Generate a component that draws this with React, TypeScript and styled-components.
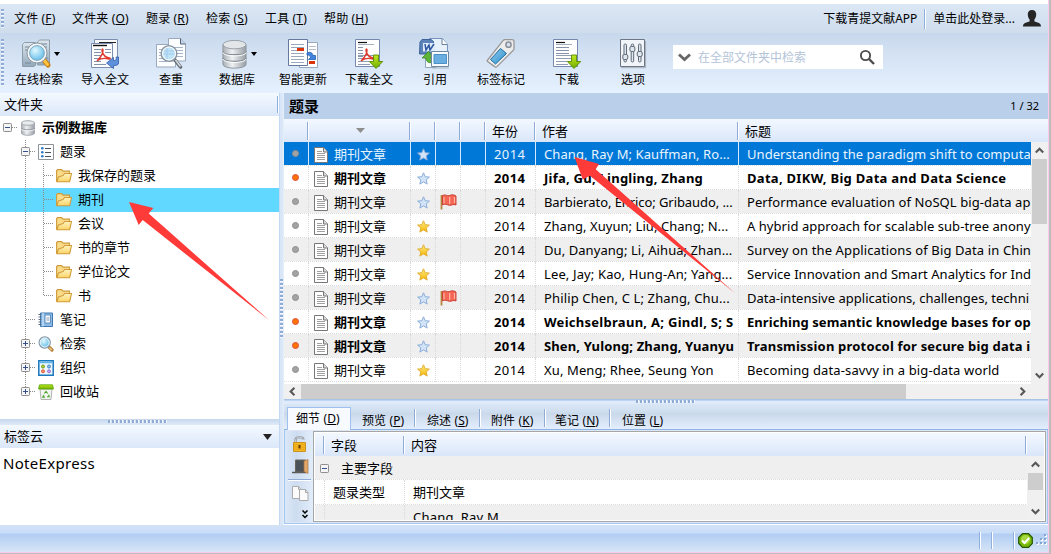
import React from 'react';
import styled, { createGlobalStyle, css } from 'styled-components';

const Global = createGlobalStyle`
  * { box-sizing: border-box; }
  body { margin: 0; background: #fff; overflow: hidden; }
`;

const Screen = styled.div`
  width: 1051px;
  height: 554px;
  display: flex;
  background: #bdbdbd;
  font-family: "Noto Sans", "Noto Sans CJK SC", sans-serif;
  font-size: 13px;
  color: #000;
  white-space: pre;
  position: relative;
  overflow: hidden;
`;

const Win = styled.div`
  width: 1049px;
  height: 553px;
  padding-top: 4px;
  background: #fff;
  border-right: 1px solid #f9c9ee;
  border-bottom: 1px solid #f9c9ee;
  display: flex;
  flex-direction: column;
`;

const MenuBar = styled.div`
  height: 29px;
  flex: none;
  display: flex;
  align-items: center;
  font-size: 12px;
  line-height: 28px;
  background: linear-gradient(#dbe7f5, #cedcec);
`;

const Grip = styled.div<{ $h: number }>`
  width: 3px;
  height: ${p => p.$h}px;
  margin: 0 10px 0 1px;
  background: repeating-linear-gradient(#8fabd6 0 2px, #f4f8fd 2px 3px, transparent 3px 4px);
`;

const MenuItem = styled.div<{ $w: number }>`
  width: ${p => p.$w}px;
  letter-spacing: 0.15px;
`;

const Push = styled.div`
  flex: 1;
`;

const Rule = styled.div<{ $h: number }>`
  width: 2px;
  height: ${p => p.$h}px;
  background: linear-gradient(90deg, #8fb0dc 50%, #fff 50%);
`;

const Account = styled.div<{ $pad: string }>`
  padding: ${p => p.$pad};
`;

const ToolBar = styled.div`
  height: 60px;
  flex: none;
  display: flex;
  align-items: flex-start;
  background: linear-gradient(#c8d8ec, #d6e4f5 45%, #e6f1ff);
`;

const ToolGrip = styled(Grip)`
  margin: 6px 2px 0 1px;
`;

const Tool = styled.div`
  width: 66px;
  padding-top: 5px;
  display: flex;
  flex-direction: column;
  align-items: center;
  font-size: 12px;
  line-height: 18px;
`;

const ToolPic = styled.div`
  height: 32px;
  margin-bottom: 1px;
  display: flex;
  align-items: center;
`;

const DropMark = styled.div<{ $gap: number }>`
  display: flex;
  margin: 0 ${p => -p.$gap}px 0 ${p => p.$gap}px;
`;

const SearchBox = styled.div`
  width: 210px;
  height: 24px;
  margin: 12px 0 0 7px;
  padding: 0 8px 0 5px;
  background: #fff;
  display: flex;
  align-items: center;
  font-size: 12px;
  line-height: 24px;
  color: #b4c4d8;
`;

const SearchHint = styled.div`
  flex: 1;
  padding: 1px 0 0 7px;
`;

const Body = styled.div`
  height: 432px;
  flex: none;
  display: flex;
`;

const Side = styled.div`
  width: 279px;
  display: flex;
  flex-direction: column;
`;

const SideHead = styled.div`
  height: 23px;
  flex: none;
  padding: 0 0 0 4px;
  display: flex;
  align-items: center;
  line-height: 23px;
  background: linear-gradient(#f4f9ff, #dbe7f9);
`;

const HeadArrow = styled.div`
  margin-right: 7px;
  height: 23px;
  display: flex;
  align-items: center;
`;

const Tree = styled.div`
  height: 303px;
  flex: none;
  background: #fff;
`;

const TreeRow = styled.div<{ $sel?: boolean; $bold?: boolean }>`
  height: 24px;
  display: flex;
  align-items: center;
  line-height: 23px;
  background: ${p => (p.$sel ? '#61d8ff' : 'transparent')};
  font-weight: ${p => (p.$bold ? 700 : 400)};
`;

const TreeLabel = styled.div`
  margin: -1px 0 0 6px;
`;

const SplitH = styled.div`
  height: 6px;
  flex: none;
  display: flex;
  justify-content: center;
  padding: 1px 4px 0 0;
  background: linear-gradient(#c5d7ec, #dfeafa);
`;

const DotsH = styled.div`
  width: 59px;
  height: 3px;
  background: repeating-linear-gradient(90deg, #8fabd6 0 2px, #f7faff 2px 3px, transparent 3px 4px);
`;

const Tags = styled.div`
  flex: 1;
  padding: 3px 3px;
  font-size: 15px;
  line-height: 25px;
  letter-spacing: 0.3px;
`;

const SplitV = styled.div`
  width: 5px;
  background: linear-gradient(90deg, #c3d8f2 1px, #d9e6f7 1px 3px, #e8f1fd);
  padding: 186px 0 0 1px;
`;

const DotsV = styled.div`
  width: 3px;
  height: 59px;
  background: repeating-linear-gradient(#8fabd6 0 2px, #f7faff 2px 3px, transparent 3px 4px);
`;

const Main = styled.div`
  width: 764px;
  display: flex;
  flex-direction: column;
`;

const MainTitle = styled.div`
  height: 26px;
  flex: none;
  padding: 0 9px 0 5px;
  display: flex;
  align-items: center;
  justify-content: space-between;
  background: #b9cfea;
  line-height: 24px;
  font-size: 15px;
  font-weight: 700;
`;

const Counter = styled.span`
  font-size: 11px;
  font-weight: 400;
`;

const COLS = '25px 102px 25px 25px 25px 50px 203px 292px';

const Grid = styled.div<{ $cols: string }>`
  display: grid;
  grid-template-columns: ${p => p.$cols};
`;

const ListHead = styled(Grid)`
  height: 23px;
  flex: none;
  line-height: 23px;
  align-items: center;
  background: linear-gradient(#f3f8ff, #d9e6f9);
`;

const HeadCell = styled.div<{ $last?: boolean }>`
  height: 18px;
  padding-left: 6px;
  line-height: 18px;
  display: flex;
  align-items: center;
  ${p => !p.$last && css`
    background: linear-gradient(90deg, #8fabd6 50%, #fff 50%) right / 2px 100% no-repeat;
  `}
`;

const SortCell = styled(HeadCell)`
  justify-content: center;
  padding: 0;
`;

const ListArea = styled.div`
  height: 242px;
  flex: none;
  display: flex;
`;

const Rows = styled.div`
  width: 747px;
  overflow: hidden;
`;

const ROW_DOTS = 'repeating-linear-gradient(90deg, #dcdcdc 0 1px, #fff 1px 2px)';

const Row = styled(Grid)<{ $sel?: boolean; $alt?: boolean; $bold?: boolean; $h?: number }>`
  height: ${p => p.$h ?? 24}px;
  line-height: 23px;
  font-weight: ${p => (p.$bold ? 700 : 400)};
  color: ${p => (p.$sel ? '#e9f4ff' : '#000')};
  background: ${ROW_DOTS} bottom / 100% 1px no-repeat, ${p => (p.$sel ? '#0078d7' : p.$alt ? '#efefef' : '#fff')};
`;

const Cell = styled.div<{ $sel?: boolean; $pad?: number; $last?: boolean; $track?: number }>`
  height: 24px;
  padding: 1px 0 0 ${p => p.$pad ?? 0}px;
  display: flex;
  align-items: center;
  overflow: hidden;
  letter-spacing: ${p => p.$track ?? 0}px;
  border-right: ${p => (p.$last ? 'none' : p.$sel ? '1px solid #d5e9fb' : '1px dotted #d9d9d9')};
`;

const PicCell = styled(Cell)`
  padding-top: 0;
`;

const Dot = styled.div<{ $hot?: boolean }>`
  width: 7px;
  height: 7px;
  margin-top: -1px;
  border-radius: 50%;
  background: ${p => (p.$hot ? '#ff7200' : '#a3a3a3')};
  border: 1px solid ${p => (p.$hot ? '#dc5145' : '#8e8e8e')};
`;

const Kind = styled.div<{ $gap?: number }>`
  margin-left: ${p => p.$gap ?? 6}px;
`;

const VBar = styled.div`
  width: 17px;
  padding: 0 1px 0 0;
  background: #f0f0f0;
  display: flex;
  flex-direction: column;
`;

const VThumb = styled.div<{ $h: number }>`
  height: ${p => p.$h}px;
  width: 15px;
  margin-left: 1px;
  background: #cdcdcd;
`;

const BarBtn = styled.div`
  width: 17px;
  height: 17px;
  flex: none;
  display: flex;
  align-items: center;
  justify-content: center;
`;

const HBar = styled.div`
  height: 15px;
  flex: none;
  padding-right: 17px;
  display: flex;
  align-items: center;
  background: #f0f0f0;
`;

const HThumb = styled.div`
  width: 605px;
  height: 15px;
  background: #cdcdcd;
`;

const SplitMain = styled(SplitH)`
  height: 5px;
  padding-right: 2px;
  background: linear-gradient(#a9c3e4 0 1px, #bdd5f2 1px 2px, #dfeafa 2px);
`;

const Tabs = styled.div`
  height: 26px;
  flex: none;
  padding: 3px 0 0 3px;
  display: flex;
  font-size: 12px;
  background: linear-gradient(#d9e6f6 0, #cfdeef 8px, #c9d8ea 9px, #e3eefd);
  border-bottom: 1px solid #8fb4e3;
`;

const Tab = styled.div<{ $w: number; $on?: boolean; $sep?: boolean; $pad: number }>`
  width: ${p => p.$w}px;
  height: 22px;
  padding-left: ${p => p.$pad}px;
  line-height: 27px;
  letter-spacing: 0.1px;
  ${p => p.$sep && css`
    background: linear-gradient(90deg, #8fabd6 50%, #fff 50%) right 2px / 2px 18px no-repeat;
  `}
  ${p => p.$on && css`
    height: 23px;
    line-height: 21px;
    border: 1px solid #9dc0ee;
    border-bottom: none;
    background: #f7fbff;
  `}
`;

const Detail = styled.div`
  height: 94px;
  flex: none;
  padding: 1px 1px 1px 0;
  display: flex;
  border: 1px solid #a4c6f0;
  border-top: none;
  background: #dce8f7;
`;

const Tray = styled.div`
  width: 28px;
  padding: 5px 0 0 3px;
  display: flex;
  flex-direction: column;
  align-items: flex-start;
  background: linear-gradient(90deg, #dbe8f8, #cddcef 40%, #e2edfb);
`;

const TrayPic = styled.div<{ $h: number; $left?: number }>`
  height: ${p => p.$h}px;
  margin-left: ${p => p.$left ?? 4}px;
  display: flex;
  align-items: flex-start;
`;

const TrayRule = styled.div`
  width: 23px;
  height: 2px;
  margin-bottom: 5px;
  background: linear-gradient(#8fabd6 50%, #fff 50%);
`;

const Sheet = styled.div`
  flex: 1;
  height: 91px;
  border: 1px solid #a6a6a6;
  padding: 1px;
  background: #fff;
  overflow: hidden;
`;

const SheetBody = styled.div`
  height: 64px;
  display: flex;
`;

const Fields = styled.div`
  width: 713px;
  flex: 1;
  overflow: hidden;
`;

const Status = styled.div`
  height: 27px;
  flex: none;
  padding: 3px 0 0 0;
  display: flex;
  align-items: center;
  background: linear-gradient(#d3e2f6 0, #c9ddf9 8px, #b1cdf3 9px, #d7e5f6 27px);
`;

const Gap = styled.div<{ $w: number }>`
  width: ${p => p.$w}px;
`;

const Overlay = styled.svg`
  position: absolute;
  left: 0;
  top: 0;
  pointer-events: none;
`;

const Sprite = styled.svg`
  position: absolute;
`;

const Key = ({ k }: { k: string }) => <> (<u>{k}</u>)</>;

const Caret = ({ w = 6, fill = '#000', h = 4 }: { w?: number; h?: number; fill?: string }) => (
  <svg width={w} height={h} viewBox="0 0 10 6" preserveAspectRatio="none"><path d="M0 0H10L5 6Z" fill={fill} /></svg>
);

const Chevron = ({ dir, size = 9 }: { dir: 'up' | 'down' | 'left' | 'right'; size?: number }) => {
  const turn = { up: 0, right: 90, down: 180, left: 270 }[dir];
  return (
    <svg width={size} height={size} viewBox="0 0 8 8">
      <path transform={`rotate(${turn} 4 4)`} d="M.7 5.7L4 2.4L7.3 5.7" fill="none" stroke="#585858" strokeWidth="1.9" />
    </svg>
  );
};

const Lines = ({ x, y, w, n, step = 3, c = '#8592ab' }: { x: number; y: number; w: number; n: number; step?: number; c?: string }) => (
  <path d={Array.from({ length: n }, (_, i) => `M${x} ${y + i * step}h${w}`).join('')} stroke={c} strokeWidth="1" />
);

const Defs = () => (
  <Sprite width="0" height="0">
    <defs>
      <linearGradient id="metal"><stop offset="0" stopColor="#a9afb5" /><stop offset=".4" stopColor="#eef0f2" /><stop offset="1" stopColor="#979ea5" /></linearGradient>
      <linearGradient id="steel" x2="0" y2="1"><stop offset="0" stopColor="#dfe7ee" /><stop offset="1" stopColor="#93a8ba" /></linearGradient>
      <linearGradient id="green" x2="0" y2="1"><stop offset="0" stopColor="#c3e820" /><stop offset="1" stopColor="#6fae00" /></linearGradient>
      <linearGradient id="blue" x2="1" y2="1"><stop offset="0" stopColor="#8fcdf0" /><stop offset="1" stopColor="#2e8fcb" /></linearGradient>
      <linearGradient id="folder" x2="0" y2="1"><stop offset="0" stopColor="#fff3c2" /><stop offset="1" stopColor="#fbd465" /></linearGradient>
      <linearGradient id="gold" x2="0" y2="1"><stop offset="0" stopColor="#fff08a" /><stop offset="1" stopColor="#f5b400" /></linearGradient>
      <radialGradient id="lens" cx=".4" cy=".35"><stop offset="0" stopColor="#e2f8ff" /><stop offset="1" stopColor="#79c8ec" /></radialGradient>
    </defs>
  </Sprite>
);

const OnlineIcon = () => (
  <svg width="32" height="32" viewBox="0 0 32 32">
    <path d="M2.500 6.500l2-2h11v23l-2 1h-11z" fill="url(#steel)" stroke="#8b9dab" />
    <path d="M17.500 4l2-2h10v24l-2 1h-10z" fill="url(#steel)" stroke="#8b9dab" />
    <path d="M5 9h7M5 12h4M21 6h6M22 9h5M24 20h4M5 25h6" stroke="#75899b" />
    <path d="M23 21l5 6" stroke="#c8770c" strokeWidth="5" strokeLinecap="round" />
    <path d="M23.500 21.500l4 5" stroke="#ffc545" strokeWidth="3" strokeLinecap="round" />
    <circle cx="17" cy="15" r="8.600" fill="url(#lens)" stroke="#f5f9fb" strokeWidth="2.600" />
    <circle cx="17" cy="15" r="10" fill="none" stroke="#8a97a2" />
    <circle cx="17" cy="15" r="7.400" fill="none" stroke="#6293b1" strokeWidth=".8" />
  </svg>
);

const PdfMark = () => (
  <path d="M8 23C12 19 14.500 15 14 11.500C13.500 10.500 12.700 11 13 13C14 17 16 19.500 20.500 20C22 20.500 21 21.500 19 20.800C15 19.800 11.500 20.500 8.600 22.500" fill="none" stroke="#df3b2f" strokeWidth="1.400" />
);

const DownArrow = () => (
  <path d="M20.500 17h5v6.500h4.200l-6.700 7l-6.700-7h4.200z" fill="url(#green)" stroke="#578b00" strokeWidth=".9" />
);

const ImportIcon = () => (
  <svg width="32" height="32" viewBox="0 0 32 32">
    <path d="M5.500 1.500h23v24h-23z" fill="#f7f9fc" stroke="#7d8fae" />
    <path d="M10 4.500h17" stroke="#222" />
    <path d="M2.500 5.500h21v24h-21z" fill="#fff" stroke="#7d8fae" />
    <path d="M4 7.500h14" stroke="#111" strokeWidth="1.400" />
    <Lines x={5} y={11.500} w={7} n={5} />
    <Lines x={16} y={11.500} w={6} n={2} />
    <Lines x={5} y={26.500} w={12} n={1} />
    <PdfMark />
    <path d="M29.500 19v6c0 2-2 2.500-5 2.500v3l-7-5.500l7-5.500v3h1.500c1 0 1.200-.5 1.200-3.500z" fill="#5f90dc" stroke="#2e5ca8" strokeWidth=".8" />
  </svg>
);

const CompareIcon = () => (
  <svg width="32" height="32" viewBox="0 0 32 32">
    <path d="M1.500 6.500h19v22.500h-19z" fill="#fdfeff" stroke="#9aa8be" />
    <path d="M13.500.5h12l5 5.500v17h-17z" fill="#fdfeff" stroke="#9aa8be" />
    <path d="M25.500.5v5.500h5" fill="#c5d3e6" stroke="#50617c" />
    <Lines x={4} y={11.500} w={8} n={5} c="#a8b4c8" />
    <Lines x={19} y={9.500} w={9} n={4} c="#a8b4c8" />
    <path d="M20 22l5.500 7" stroke="#667079" strokeWidth="3.600" strokeLinecap="round" />
    <path d="M20.500 22l5 6.500" stroke="#d8dde1" strokeWidth="1.400" />
    <circle cx="14" cy="15.500" r="7.800" fill="#bfe3f7" stroke="#8b959f" strokeWidth="1.500" />
    <path d="M9 13h10M9 16h10M12 9.500v12" stroke="#a3cbee" />
    <circle cx="14" cy="15.500" r="6.500" fill="none" stroke="#fff" strokeWidth="1" />
  </svg>
);

const DbIcon = () => (
  <svg width="25" height="30" viewBox="0 0 26 32" preserveAspectRatio="none">
    <path d="M1 6v21c0 5.500 24 5.500 24 0V6z" fill="url(#metal)" stroke="#8d959c" />
    <ellipse cx="13" cy="6" rx="12" ry="4.500" fill="#e3e6e9" stroke="#959da4" />
    <path d="M1 13c0 5 24 5 24 0M1 20c0 5 24 5 24 0" fill="none" stroke="#868e96" strokeWidth="1.300" />
    <path d="M1 14.300c0 5 24 5 24 0M1 21.300c0 5 24 5 24 0" fill="none" stroke="#fff" />
  </svg>
);

const SmallDbIcon = () => (
  <svg width="16" height="16" viewBox="0 0 16 16">
    <path d="M1.500 3v10c0 3 13 3 13 0V3z" fill="url(#metal)" stroke="#a3a9ae" />
    <ellipse cx="8" cy="3" rx="6.500" ry="2.300" fill="#e9ebed" stroke="#a3a9ae" />
    <path d="M1.500 8c0 2.500 13 2.500 13 0" fill="none" stroke="#8f979e" />
    <path d="M1.500 9c0 2.500 13 2.500 13 0" fill="none" stroke="#fff" strokeWidth=".8" />
  </svg>
);

const UpdateIcon = () => (
  <svg width="32" height="32" viewBox="0 0 32 32">
    <path d="M12.500 4.500h18v25h-18z" fill="#fff" stroke="#9ba9bf" />
    <path d="M1.500 1.500h19v26h-19z" fill="#fff" stroke="#65799c" />
    <Lines x={4} y={6.500} w={13} n={7} c="#9aa8bd" />
    <path d="M10 10h7v3h-7zM22 23h6v3h-6z" fill="#dc3208" />
    <Lines x={22} y={8.500} w={7} n={2} c="#b3bdca" />
    <path d="M20 15c3-1.500 5.500-.5 6 2.500h2.500v4h-7l2-2c-.5-2-1.500-2.500-3.500-2.500z" fill="#4385dd" stroke="#2160b3" strokeWidth=".8" />
  </svg>
);

const DownloadIcon = ({ pdf }: { pdf?: boolean }) => (
  <svg width="32" height="32" viewBox="0 0 32 32">
    <path d="M2.500 1.500h24v27h-24z" fill="#fff" stroke="#7489ab" />
    <path d="M5 4.500h9" stroke="#111" strokeWidth="1.200" />
    <path d="M5 6.500h16" stroke="#a5b0c0" />
    <Lines x={5} y={9.500} w={pdf ? 5 : 13} n={pdf ? 4 : 3} />
    <path d="M5 17.500h18M5 20.500h16M5 23.500h11M5 26.500h12" stroke="#8592ab" strokeWidth=".9" />
    {pdf && <PdfMark />}
    <DownArrow />
  </svg>
);

const CiteIcon = () => (
  <svg width="32" height="32" viewBox="0 0 32 32">
    <path d="M10.500.5h13l5 6v8h-18z" fill="#e7f1fb" stroke="#7694bb" />
    <path d="M23 .5v6h5.500" fill="#fff" stroke="#6d8099" />
    <path d="M6.500 15v14.500h11" fill="#f5f9fc" stroke="#8da5bd" />
    <path d="M1 4l2-2.500h9l2.500 2v11l-2 1.500H.500z" fill="#5b83ba" stroke="#3e649b" />
    <path d="M4 5h12v8.500H4z" fill="#dfebfa" />
    <path d="M6 6l1 6l3-5l1 5l4-6" fill="none" stroke="#2d58a0" strokeWidth="1.500" />
    <path d="M3 20l6.500-6.500L15 20h-4c0 3 2 4 4 4.500c-6 1-8-1-8-4.500z" fill="#5fb537" stroke="#3a8b24" strokeWidth=".8" />
    <path d="M12.500 13.500h17v15h-17z" fill="#f7fafc" stroke="#6f88a2" />
    <path d="M15 16.500h12.500v9h-12.500z" fill="#69aee1" stroke="#4d90c5" />
    <path d="M13 30h17" stroke="#a7b4c0" />
  </svg>
);

const TagIcon = () => (
  <svg width="32" height="32" viewBox="0 0 32 32">
    <path d="M2.600 22L18 2.600Q18.800 1.600 20 1.600H27Q28.800 1.600 29 3.400V10.500Q29 11.800 28 12.600L12 28.600c-.8.800-1.600.8-2.400 0l-7-5c-.6-.6-.6-1 0-1.600z" fill="#ececec" stroke="#989898" strokeWidth="1.300" />
    <path d="M5.500 21.500L15.500 10.500L21.500 15.500L10.500 26z" fill="url(#blue)" stroke="#1d6aa0" />
    <circle cx="23.500" cy="6.700" r="2.600" fill="#d3e1f1" stroke="#8a8f96" strokeWidth="1.500" />
  </svg>
);

const OptionsIcon = () => (
  <svg width="32" height="32" viewBox="0 0 32 32">
    <path d="M3.500 1.500h24v27h-24z" fill="#f1f5fa" stroke="#6e7684" />
    <path d="M4 29.700h24.600V3" fill="none" stroke="#a5afbb" />
    <g stroke="#5f6978" fill="#dfe6ee" transform="translate(-.5 -.5)">
      <rect x="7.500" y="6.500" width="2.500" height="18" rx="1.200" /><rect x="14.700" y="6.500" width="2.500" height="18" rx="1.200" /><rect x="22" y="6.500" width="2.500" height="18" rx="1.200" />
      <rect x="6.300" y="17" width="5" height="5" rx="1.500" /><rect x="13.400" y="9" width="5" height="5" rx="1.500" /><rect x="20.700" y="14" width="5" height="5" rx="1.500" />
    </g>
  </svg>
);

const UserIcon = () => (
  <svg width="18" height="18" viewBox="0 0 18 18">
    <path d="M9 0c3 0 4.500 2 4.200 5c-.2 2-1 3.500-1.800 4.500v2c3 1 6.600 1.300 6.600 5H0c0-3.700 3.600-4 6.600-5V9.500C5.800 8.500 5 7 4.800 5C4.500 2 6 0 9 0z" fill="#262626" />
  </svg>
);

const FolderIcon = () => (
  <svg width="16" height="14" viewBox="0 0 16 14">
    <path d="M.6 12.400V1.600L1.600.6h4l1.400 1.500h6.400v3" fill="#f9dc8b" stroke="#cf9a3a" strokeWidth="1.100" />
    <path d="M.8 12.700L2.500 8L7 6.500l1.500-2h7l-1.800 8.200z" fill="url(#folder)" stroke="#cf9a3a" strokeWidth="1.100" strokeLinejoin="round" />
  </svg>
);

const ListIcon = () => (
  <svg width="16" height="16" viewBox="0 0 16 16">
    <path d="M.5.5h15v15H.5z" fill="#fff" stroke="#8f9499" />
    <path d="M7 4.500h6M7 8.500h6M7 12.500h6" stroke="#49535e" strokeWidth="1" />
    <circle cx="4.300" cy="4.200" r="1.300" fill="#287ac8" /><circle cx="4.300" cy="8.200" r="1.300" fill="#287ac8" /><circle cx="4.300" cy="12.200" r="1.300" fill="#287ac8" />
  </svg>
);

const NoteIcon = () => (
  <svg width="16" height="16" viewBox="0 0 16 16">
    <path d="M2.500 1h12v13.500h-12z" fill="#8dbbe6" stroke="#3f78b0" />
    <path d="M5 1v13.500" stroke="#d9ecff" />
    <path d="M7 3h5.500v8H7z" fill="#f3f8fe" stroke="#4d7db0" strokeWidth=".8" />
    <path d="M8.500 6h3M8.500 8h3" stroke="#7389a3" strokeWidth=".8" />
    <path d="M.5 2.500h3M.5 5h3M.5 7.500h3M.5 10h3M.5 12.500h3" stroke="#5b7085" />
  </svg>
);

const FindIcon = () => (
  <svg width="16" height="16" viewBox="0 0 16 16">
    <path d="M11 11l3 3" stroke="#b5803c" strokeWidth="3.200" strokeLinecap="round" />
    <path d="M11.300 11.500l2.500 2.500" stroke="#eec98a" strokeWidth="1.300" />
    <circle cx="6.700" cy="6.500" r="5.600" fill="url(#lens)" stroke="#8797a7" strokeWidth="1.200" />
    <circle cx="6.700" cy="6.500" r="4.500" fill="none" stroke="#f1f8fc" />
  </svg>
);

const OrgIcon = () => (
  <svg width="16" height="16" viewBox="0 0 16 16">
    <path d="M.8.8h14.400v14.400H.8z" fill="#edf7ff" stroke="#1878bd" strokeWidth="1.500" />
    <path d="M1.500 2.500h13" stroke="#5eb4e9" strokeWidth="1.500" />
    <circle cx="5" cy="6.500" r="1.500" fill="#b5d53c" stroke="#6f9612" /><circle cx="11" cy="6.500" r="1.500" fill="#8cc4f2" stroke="#3f82c2" />
    <circle cx="5" cy="11.300" r="1.500" fill="#ff9773" stroke="#dc5730" /><circle cx="11" cy="11.300" r="1.500" fill="#caabf5" stroke="#946fd0" />
  </svg>
);

const BinIcon = () => (
  <svg width="16" height="16" viewBox="0 0 16 16">
    <path d="M2 5h12l-1 10.500H3z" fill="#f2f4f2" stroke="#aeb5ad" />
    <path d="M1.500.8h13l1 4.200H.5z" fill="url(#green)" stroke="#56a70b" strokeWidth=".8" />
    <path d="M6.300 9.500l1.700-2.200l1.700 2.200M10.500 10.800l.8 2H9M7 13.100H4.700L5.900 11" fill="none" stroke="#4da62b" strokeWidth="1.100" />
  </svg>
);

const DocIcon = () => (
  <svg width="14" height="16" viewBox="0 0 14 16">
    <path d="M.5.5h9l4 4.500v10.500H.5z" fill="#fff" stroke="#777" strokeWidth="1" />
    <path d="M9.500 .5v4.500h4" fill="#ddd" stroke="#777" />
    <path d="M3 4.500h5M3 6.500h8M3 8.500h8M3 10.500h8M3 12.500h8" stroke="#a0a0a0" strokeWidth="1" />
  </svg>
);

const Star = ({ on }: { on?: boolean }) => (
  <svg width="13" height="13" viewBox="0 0 13 13">
    <path d="M6.500.8l1.700 3.900l4.200.4l-3.200 2.800l1 4.200L6.500 9.900L2.800 12.100l1-4.200L.6 5.100l4.200-.4z" fill={on ? 'url(#gold)' : '#d3e3f8'} stroke={on ? '#e3ae35' : '#8badd9'} strokeWidth="1" strokeLinejoin="round" />
  </svg>
);

const Flag = () => (
  <svg width="17" height="16" viewBox="0 0 17 16">
    <path d="M1.500 1v14.500" stroke="#b5853f" strokeWidth="1.800" />
    <path d="M2.500 1.500C5-.3 7 2.500 9.500 1.500C12 .3 14 .8 16 2v9c-3-1.500-4 .6-6.500.3C7 11 5.500 9.300 2.500 10.800z" fill="#f56654" stroke="#c4382b" strokeWidth=".9" />
    <path d="M4 3v6.500M9.700 3v7M14.500 3v6" stroke="#ffb5a6" strokeWidth="1.200" />
  </svg>
);

const LockIcon = () => (
  <svg width="13" height="16" viewBox="0 0 13 16">
    <path d="M2.500 6V3.500C2.500.5 10.500.5 10.500 3.500" fill="none" stroke="#8b9096" strokeWidth="2.200" />
    <path d="M2.500 6V3.500C2.500.5 10.500.5 10.500 3.500" fill="none" stroke="#dde0e3" strokeWidth=".8" />
    <path d="M.6 6.600h11.800v8.800H.6z" fill="#fcbf25" stroke="#c98a10" />
    <path d="M1.500 8.800h10M1.500 11h10M1.500 13.200h10" stroke="#d99413" strokeWidth=".8" />
    <path d="M5.500 9h2v3.500h-2z" fill="#5f3d04" />
  </svg>
);

const DoorIcon = () => (
  <svg width="17" height="16" viewBox="0 0 17 16">
    <path d="M0 13.500h14" stroke="#555" strokeWidth="1.500" />
    <path d="M3.500 1h10v12h-10z" fill="#4b5359" stroke="#6d6459" />
    <path d="M12 2l4-1.500v14L12 12.500z" fill="#dfa76a" stroke="#a9743f" strokeWidth=".7" />
  </svg>
);

const PagesIcon = () => (
  <svg width="17" height="16" viewBox="0 0 17 16">
    <path d="M.5.5h6l2.500 3v9H.5z" fill="#fbfbfb" stroke="#aaa" />
    <path d="M7.500 3.500h6l2.500 3v8H7.500z" fill="#fbfbfb" stroke="#aaa" />
    <path d="M6.500.5v3H9M13.500 3.500v3H16" fill="none" stroke="#aaa" />
  </svg>
);

const MoreIcon = () => (
  <svg width="6" height="9" viewBox="0 0 6 9"><path d="M.5.500L3 3L5.500.500M.5 5L3 7.500L5.500 5" fill="none" stroke="#000" strokeWidth="1.500" /></svg>
);

const OkIcon = () => (
  <svg width="15" height="15" viewBox="0 0 15 15">
    <path d="M4.500.7h6L14.300 4.500v6L10.500 14.300h-6L.7 10.500v-6z" fill="#78b80b" stroke="#255700" strokeWidth="1.200" />
    <circle cx="7.500" cy="6.500" r="4.500" fill="#a6d93d" />
    <path d="M4 7.500L6.500 10L11.200 5" fill="none" stroke="#fff" strokeWidth="2" />
  </svg>
);

const SizeGrip = () => (
  <svg width="12" height="12" viewBox="0 0 12 12">
    {[[8, 0], [4, 4], [8, 4], [0, 8], [4, 8], [8, 8]].map(([x, y]) => (
      <g key={`${x}-${y}`}><path d={`M${x + 1} ${y + 1}h2v2h-2z`} fill="#fff" /><path d={`M${x} ${y}h2v2h-2z`} fill="#84a5d3" /></g>
    ))}
  </svg>
);

const PlusMinus = ({ plus }: { plus?: boolean }) => (
  <>
    <rect x=".5" y=".5" width="8" height="8" rx=".8" fill="#f5f5f5" stroke="#8e8e8e" />
    <path d={plus ? 'M2 4.500h5M4.500 2v5' : 'M2 4.500h5'} stroke="#35508f" />
  </>
);

type Guide = 'root' | 'open' | 'shut' | 'leaf' | 'child' | 'childEnd' | 'last';

/* Dotted branch lines and the expander box left of a tree icon. */
const Branch = ({ kind }: { kind: Guide }) => {
  const child = kind.startsWith('child');
  const width = kind === 'root' ? 20 : child ? 56 : 38;
  const dots = { stroke: '#8c8c8c', strokeDasharray: '1 1', fill: 'none' } as const;
  return (
    <svg width={width} height="24" viewBox={`0 0 ${width} 24`}>
      {kind === 'root' && <><path d="M12 11.500h5" {...dots} /><g transform="translate(3 7)"><PlusMinus /></g></>}
      {kind !== 'root' && <path d={kind === 'last' ? 'M25.500 0v12' : 'M25.500 0v24'} {...dots} />}
      {kind === 'leaf' && <path d="M26 11.500h9" {...dots} />}
      {child && <path d={kind === 'childEnd' ? 'M43.500 0v12' : 'M43.500 0v24'} {...dots} />}
      {child && <path d="M44 11.500h9" {...dots} />}
      {(kind === 'open' || kind === 'shut' || kind === 'last') && (
        <><path d="M30 11.500h5" {...dots} /><g transform="translate(21 7)"><PlusMinus plus={kind !== 'open'} /></g></>
      )}
    </svg>
  );
};

const tools: [string, React.ReactNode, number?][] = [
  ['在线检索', <OnlineIcon />, 2],
  ['导入全文', <ImportIcon />],
  ['查重', <CompareIcon />],
  ['数据库', <DbIcon />, 4],
  ['智能更新', <UpdateIcon />],
  ['下载全文', <DownloadIcon pdf />],
  ['引用', <CiteIcon />],
  ['标签标记', <TagIcon />],
  ['下载', <DownloadIcon />],
  ['选项', <OptionsIcon />],
];

const tree: [Guide, React.ReactNode, string][] = [
  ['root', <SmallDbIcon />, '示例数据库'],
  ['open', <ListIcon />, '题录'],
  ['child', <FolderIcon />, '我保存的题录'],
  ['child', <FolderIcon />, '期刊'],
  ['child', <FolderIcon />, '会议'],
  ['child', <FolderIcon />, '书的章节'],
  ['child', <FolderIcon />, '学位论文'],
  ['childEnd', <FolderIcon />, '书'],
  ['leaf', <NoteIcon />, '笔记'],
  ['shut', <FindIcon />, '检索'],
  ['shut', <OrgIcon />, '组织'],
  ['last', <BinIcon />, '回收站'],
];

interface Rec { who: string; title: string; unread?: boolean; star?: boolean; flag?: boolean; wt: number; tt: number }

const records: Rec[] = [
  { who: 'Chang, Ray M; Kauffman, Ro...', title: 'Understanding the paradigm shift to computa', wt: 0.08, tt: 0.05 },
  { who: 'Jifa, Gu; Lingling, Zhang', title: 'Data, DIKW, Big Data and Data Science', unread: true, wt: 0.25, tt: 0.29 },
  { who: 'Barbierato, Enrico; Gribaudo, ...', title: 'Performance evaluation of NoSQL big-data ap', flag: true, wt: -0.08, tt: 0.08 },
  { who: 'Zhang, Xuyun; Liu, Chang; N...', title: 'A hybrid approach for scalable sub-tree anony', star: true, wt: 0.05, tt: 0.05 },
  { who: 'Du, Danyang; Li, Aihua; Zhan...', title: 'Survey on the Applications of Big Data in Chin', star: true, wt: 0.07, tt: 0.12 },
  { who: 'Lee, Jay; Kao, Hung-An; Yang...', title: 'Service Innovation and Smart Analytics for Ind', star: true, wt: 0.13, tt: 0.05 },
  { who: 'Philip Chen, C L; Zhang, Chu...', title: 'Data-intensive applications, challenges, techni', flag: true, wt: 0.14, tt: 0.01 },
  { who: 'Weichselbraun, A; Gindl, S; S', title: 'Enriching semantic knowledge bases for op', unread: true, wt: 0.28, tt: 0.07 },
  { who: 'Shen, Yulong; Zhang, Yuanyu', title: 'Transmission protocol for secure big data i', unread: true, wt: 0.13, tt: 0.19 },
  { who: 'Xu, Meng; Rhee, Seung Yon', title: 'Becoming data-savvy in a big-data world', star: true, wt: 0.12, tt: 0.13 },
];

const menus: [string, string, number][] = [
  ['文件', 'F', 58], ['文件夹', 'O', 74], ['题录', 'R', 60], ['检索', 'S', 59], ['工具', 'T', 59], ['帮助', 'H', 60],
];

const tabs: [string, string, number, number][] = [
  ['细节', 'D', 64, 8], ['预览', 'P', 65, 11], ['综述', 'S', 65, 11], ['附件', 'K', 65, 10], ['笔记', 'N', 65, 9], ['位置', 'L', 65, 11],
];

const DETAIL_COLS = '10px 80px 622px 1fr';
const FIELD_COLS = '10px 80px 622px';

export default function App() {
  return (
    <Screen>
      <Global />
      <Defs />
      <Win>
        <MenuBar>
          <Grip $h={20} />
          {menus.map(([t, k, w]) => <MenuItem key={t} $w={w}>{t}<Key k={k} /></MenuItem>)}
          <Push />
          <Account $pad="0 7px 0 0">下载青提文献APP</Account>
          <Rule $h={20} />
          <Account $pad="0 8px 0 7px">单击此处登录...</Account>
          <UserIcon />
          <Gap $w={7} />
        </MenuBar>
        <ToolBar>
          <ToolGrip $h={48} />
          {tools.map(([t, icon, drop]) => (
            <Tool key={t}>
              <ToolPic>{icon}{drop && <DropMark $gap={drop}><Caret /></DropMark>}</ToolPic>
              {t}
            </Tool>
          ))}
          <SearchBox>
            <svg width="13" height="9" viewBox="0 0 13 9"><path d="M1 1.500L6.500 6.500L12 1.500" fill="none" stroke="#666" strokeWidth="2.800" /></svg>
            <SearchHint>在全部文件夹中检索</SearchHint>
            <svg width="16" height="16" viewBox="0 0 16 16"><circle cx="6.500" cy="6.500" r="4.600" fill="none" stroke="#4c4c4c" strokeWidth="1.900" /><path d="M10 10l5 5" stroke="#4c4c4c" strokeWidth="2.400" /></svg>
          </SearchBox>
        </ToolBar>
        <Body>
          <Side>
            <SideHead>文件夹<Push /><Rule $h={17} /></SideHead>
            <Tree>
              {tree.map(([kind, icon, t], i) => (
                <TreeRow key={t} $sel={i === 3} $bold={i === 0}>
                  <Branch kind={kind} />{icon}<TreeLabel>{t}</TreeLabel>
                </TreeRow>
              ))}
            </Tree>
            <SplitH><DotsH /></SplitH>
            <SideHead>标签云<Push /><HeadArrow><Caret w={9} h={6} fill="#222" /></HeadArrow></SideHead>
            <Tags>NoteExpress</Tags>
          </Side>
          <SplitV><DotsV /></SplitV>
          <Main>
            <MainTitle>题录<Counter>1 / 32</Counter></MainTitle>
            <ListHead $cols={COLS}>
              <HeadCell />
              <SortCell><Caret w={9} h={5} fill="#8e8e8e" /></SortCell>
              <HeadCell /><HeadCell /><HeadCell />
              <HeadCell>年份</HeadCell>
              <HeadCell>作者</HeadCell>
              <HeadCell $last>标题</HeadCell>
            </ListHead>
            <ListArea>
              <Rows>
                {records.map((r, i) => {
                  const sel = i === 0;
                  return (
                    <Row key={r.title} $cols={COLS} $sel={sel} $alt={i % 2 === 0} $bold={r.unread}>
                      <PicCell $sel={sel} $pad={8}><Dot $hot={r.unread} /></PicCell>
                      <Cell $sel={sel} $pad={5}><DocIcon /><Kind>期刊文章</Kind></Cell>
                      <PicCell $sel={sel} $pad={6}><Star on={r.star} /></PicCell>
                      <PicCell $sel={sel} $pad={4}>{r.flag && <Flag />}</PicCell>
                      <Cell $sel={sel} />
                      <Cell $sel={sel} $pad={8} $track={0.4}>2014</Cell>
                      <Cell $sel={sel} $pad={8} $track={r.wt}>{r.who}</Cell>
                      <Cell $last $pad={8} $track={r.tt}>{r.title}</Cell>
                    </Row>
                  );
                })}
              </Rows>
              <VBar>
                <BarBtn><Chevron dir="up" /></BarBtn>
                <VThumb $h={65} />
                <Push />
                <BarBtn><Chevron dir="down" /></BarBtn>
              </VBar>
            </ListArea>
            <HBar>
              <BarBtn><Chevron dir="left" /></BarBtn>
              <HThumb />
              <Push />
              <BarBtn><Chevron dir="right" /></BarBtn>
            </HBar>
            <SplitMain><DotsH /></SplitMain>
            <Tabs>
              {tabs.map(([t, k, w, pad], i) => (
                <Tab key={t} $w={w} $pad={pad} $on={i === 0} $sep={i > 0 && i < 5}>{t}<Key k={k} /></Tab>
              ))}
            </Tabs>
            <Detail>
              <Tray>
                <TrayPic $h={23} $left={5}><LockIcon /></TrayPic>
                <TrayPic $h={20}><DoorIcon /></TrayPic>
                <TrayRule />
                <TrayPic $h={24}><PagesIcon /></TrayPic>
                <TrayPic $h={9} $left={14}><MoreIcon /></TrayPic>
              </Tray>
              <Sheet>
                <ListHead $cols={DETAIL_COLS}>
                  <HeadCell /><HeadCell>字段</HeadCell><HeadCell>内容</HeadCell><HeadCell $last />
                </ListHead>
                <SheetBody>
                  <Fields>
                    <Row $cols="1fr" $alt>
                      <Cell $last $pad={5}>
                        <svg width="9" height="9"><PlusMinus /></svg>
                        <Kind $gap={12}>主要字段</Kind>
                      </Cell>
                    </Row>
                    <Row $cols={FIELD_COLS} $h={25}><Cell /><Cell $pad={8}>题录类型</Cell><Cell $last $pad={8}>期刊文章</Cell></Row>
                    <Row $cols={FIELD_COLS} $alt><Cell /><Cell /><Cell $last $pad={8} $track={0.2}>Chang, Ray M</Cell></Row>
                  </Fields>
                  <VBar>
                    <BarBtn><Chevron dir="up" /></BarBtn>
                    <VThumb $h={17} />
                    <Push />
                    <BarBtn><Chevron dir="down" /></BarBtn>
                  </VBar>
                </SheetBody>
              </Sheet>
            </Detail>
          </Main>
        </Body>
        <Status>
          <Gap $w={979} />
          <Rule $h={17} /><Gap $w={10} /><Rule $h={17} /><Gap $w={20} /><Rule $h={17} />
          <Gap $w={3} /><OkIcon />
          <Gap $w={3} /><SizeGrip />
        </Status>
      </Win>
      <Overlay width="1051" height="554">
        <path d="M129 202L153.300 208L148.700 213.500L269.500 320.500L142.700 220L138.700 225Z" fill="#fe3b38" />
        <path d="M574.500 157L599 164L595.700 169.300L735 293.200L590 175.700L582.700 179.500Z" fill="#fe3b38" />
      </Overlay>
    </Screen>
  );
}
